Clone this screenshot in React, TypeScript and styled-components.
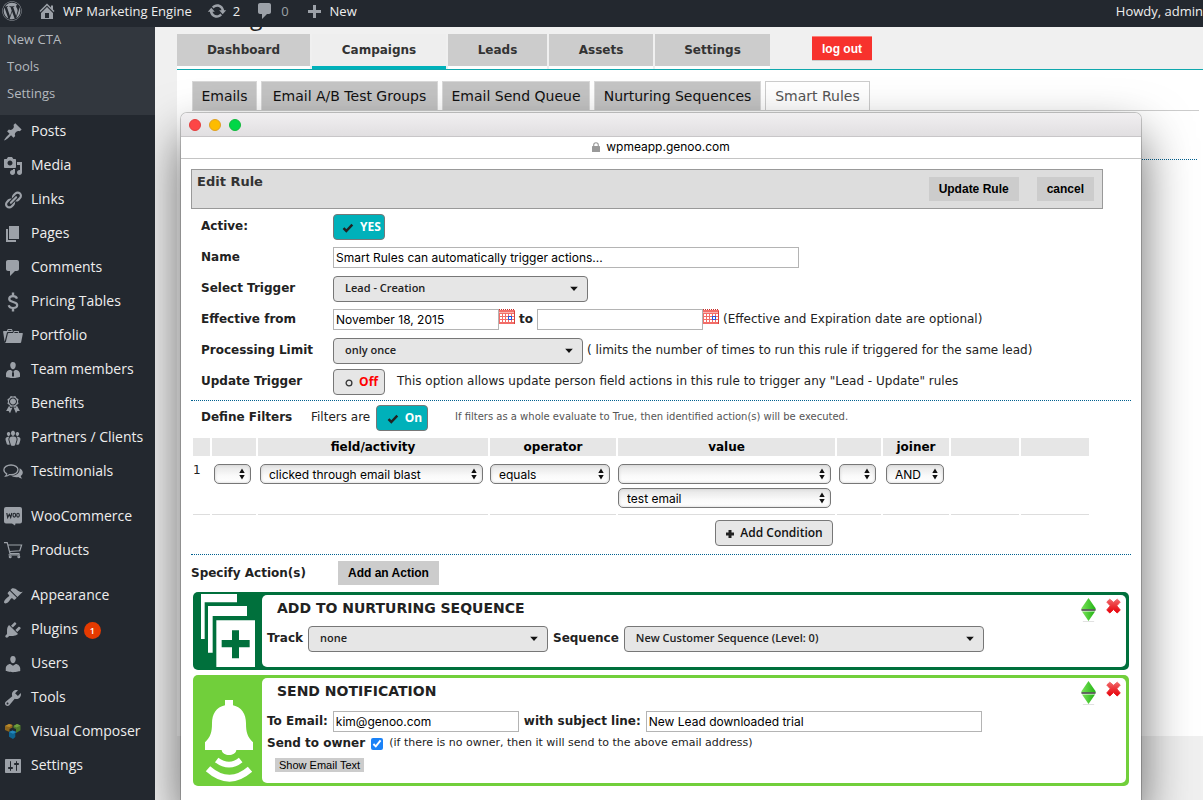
import React from "react";
import styled, { createGlobalStyle, css } from "styled-components";
import { FaWordpress } from "react-icons/fa";

const verdana = `Verdana, "DejaVu Sans", sans-serif`;
const arial = `"Liberation Sans", Arial, sans-serif`;
const system = `Inter, "Liberation Sans", sans-serif`;
const openSans = `"Open Sans", "Noto Sans", sans-serif`;

const GlobalStyle = createGlobalStyle`
  *, *::before, *::after { box-sizing: border-box; }
  body { margin: 0; background: #f0f0f0; overflow: hidden; }
  button, input, select { margin: 0; }
`;

/* ---------- Admin shell ---------- */

const Page = styled.div`
  display: flex;
  flex-direction: column;
  min-height: 100vh;
  overflow: hidden;
  font-family: ${verdana};
  font-size: 12px;
  color: #222;
`;

const AdminBar = styled.header`
  display: flex;
  align-items: center;
  height: 27px;
  padding: 0 0 5px 2px;
  background: #23282f;
  font-family: ${openSans};
  font-size: 13px;
  line-height: 20px;
  color: #eee;
  white-space: nowrap;
  z-index: 1;
`;

const BarLink = styled.a<{ $muted?: boolean }>`
  display: flex;
  align-items: center;
  gap: 6px;
  margin-right: 15px;
  color: ${(p) => (p.$muted ? "#9ca1a6" : "#eee")};
  text-decoration: none;

  svg {
    flex: none;
    color: #9ca1a8;
  }
`;

const Greeting = styled(BarLink)`
  margin: 0 0 0 auto;
`;

const Shell = styled.div`
  display: flex;
  flex: 1;
`;

const Sidebar = styled.nav`
  flex: none;
  width: 155px;
  background: #23282f;
  font-family: ${openSans};
  z-index: 1;
`;

const SubMenu = styled.div`
  padding-bottom: 7px;
  background: #32373e;
`;

const SubLink = styled.a`
  display: block;
  padding: 0 7px 3px;
  font-size: 13px;
  line-height: 24px;
  color: #b4b9be;
  text-decoration: none;
`;

const MenuLink = styled.a<{ $spaced?: boolean }>`
  display: flex;
  align-items: center;
  height: 34px;
  margin-top: ${(p) => (p.$spaced ? 11 : 0)}px;
  padding-left: 3px;
  gap: 8px;
  font-size: 14px;
  color: #eee;
  text-decoration: none;
  white-space: nowrap;

  svg {
    flex: none;
    color: #9ca1a8;
  }
`;

const MenuText = styled.span`
  padding-bottom: 2px;
  line-height: 20px;
`;

const Count = styled.span`
  width: 17px;
  margin-left: -2px;
  border-radius: 9px;
  background: #e53a00;
  color: #fff;
  font-size: 9px;
  font-weight: 600;
  line-height: 17px;
  text-align: center;
`;

const Main = styled.main`
  display: grid;
  flex: 1;
  min-width: 0;
  background: #f0f0f0;
`;

/* ---------- Page behind the window ---------- */

const Backdrop = styled.section`
  grid-area: 1 / 1;
  display: flex;
  flex-direction: column;
  min-width: 0;
  padding: 0 0 64px 22px;
`;

const ClippedTitle = styled.h1`
  display: flex;
  align-items: flex-end;
  height: 7px;
  margin: 0;
  padding: 0 0 4px 73px;
  font-family: ${openSans};
  font-size: 23px;
  line-height: 28px;
  font-weight: normal;
`;

const TopTabs = styled.div`
  display: flex;
  align-items: flex-start;
  gap: 2px;
  border-bottom: 1px solid #0fa8ad;
`;

const TopTab = styled.a<{ $width: number; $active?: boolean }>`
  width: ${(p) => p.$width}px;
  height: 35px;
  border-bottom: 3px solid ${(p) => (p.$active ? "#00b1ba" : "#fff")};
  background: ${(p) => (p.$active ? "#eee" : "#ccc")};
  color: #333;
  font-size: 12px;
  font-weight: bold;
  line-height: 32px;
  text-align: center;
  text-decoration: none;
`;

const LogOut = styled.button`
  width: 60px;
  height: 25px;
  margin: 2px 0 0 40px;
  padding: 0;
  border: 0;
  border-top: 1px solid #fb8078;
  border-bottom: 1px solid #ccc;
  background: #f7322d;
  color: #fff;
  font: bold 12px ${arial};
`;

const Panel = styled.div`
  flex: 1;
  padding: 11px 4px 0 15px;
  background: #fff;
`;

const SubTabs = styled.div`
  display: flex;
  gap: 4px;
  height: 30px;
  border-bottom: 1px solid #ccc;
`;

const SubTab = styled.a<{ $width: number; $active?: boolean }>`
  width: ${(p) => p.$width}px;
  height: 29px;
  border: 1px solid ${(p) => (p.$active ? "#ccc" : "#d8d8d8")};
  border-bottom: 0;
  background: ${(p) => (p.$active ? "#fff" : "#c4c4c4")};
  color: ${(p) => (p.$active ? "#555" : "#111")};
  font-size: 14px;
  line-height: 28px;
  text-align: center;
  text-decoration: none;
  white-space: nowrap;
`;

const dotted = css`
  height: 0;
  margin: 0;
  border: 0;
  border-top: 1px dotted #00608f;
`;

const PanelRule = styled.hr`
  ${dotted}
  margin: 48px 2px 0 0;
`;

/* ---------- Popup window ---------- */

const Window = styled.section`
  grid-area: 1 / 1;
  min-width: 960px;
  margin: 86px 62px 0 26px;
  border-radius: 6px 6px 0 0;
  background: #fff;
  box-shadow: 0 0 0 1px rgba(0, 0, 0, 0.2), 0 24px 50px rgba(0, 0, 0, 0.6);
  z-index: 0;
`;

const TitleBar = styled.div`
  display: flex;
  align-items: center;
  gap: 8px;
  height: 24px;
  padding-left: 8px;
  border-bottom: 1px solid #c8c6c8;
  border-radius: 6px 6px 0 0;
  background: linear-gradient(#f1eff1, #e1dfe1);
`;

const Light = styled.span<{ $color: string; $edge: string }>`
  width: 12px;
  height: 12px;
  border: 1px solid ${(p) => p.$edge};
  border-radius: 50%;
  background: ${(p) => p.$color};
`;

const AddressBar = styled.div`
  display: flex;
  align-items: center;
  justify-content: center;
  gap: 6px;
  height: 22px;
  padding-bottom: 2px;
  border-bottom: 1px solid #c4c4c4;
  color: #000;
  font: 12px/18px ${system};
`;

const Form = styled.form`
  padding: 10px 10px 0;
`;

const RuleHeader = styled.div`
  display: flex;
  align-items: flex-start;
  gap: 18px;
  height: 40px;
  margin-right: 28px;
  padding: 7px 8px 0 5px;
  border: 1px solid #999;
  background: #ddd;
`;

const RuleTitle = styled.h2`
  flex: 1;
  margin: 0;
  margin-top: -4px;
  color: #333;
  font-size: 13px;
  line-height: 18px;
`;

const FlatButton = styled.button<{ $small?: boolean }>`
  height: ${(p) => (p.$small ? 14 : 24)}px;
  padding: 0 ${(p) => (p.$small ? 4 : 10)}px;
  border: 0;
  background: #ccc;
  color: #000;
  font-family: ${arial};
  font-size: ${(p) => (p.$small ? 11 : 12)}px;
  font-weight: ${(p) => (p.$small ? "normal" : "bold")};
  line-height: 14px;
  white-space: nowrap;
`;

const Fields = styled.div`
  padding: 3px 0 2px 10px;
`;

const Field = styled.div`
  display: grid;
  grid-template-columns: 132px 1fr;
  align-items: center;
  height: 31px;
  padding: 2px 0 3px;
`;

const Label = styled.label`
  font-size: 12px;
  font-weight: bold;
  line-height: 16px;
  padding-bottom: 2px;
  white-space: nowrap;
`;

const Inline = styled.div<{ $gap?: number }>`
  display: flex;
  align-items: center;
  gap: ${(p) => p.$gap ?? 4}px;
`;

const Text = styled.span<{ $size?: number; $color?: string }>`
  padding-bottom: 2px;
  color: ${(p) => p.$color ?? "#222"};
  font-size: ${(p) => p.$size ?? 12}px;
  line-height: 16px;
  white-space: nowrap;
`;

const TextInput = styled.input<{ $width: number }>`
  width: ${(p) => p.$width}px;
  height: 21px;
  margin-bottom: 1px;
  padding: 0 2px;
  border: 1px solid #b4b4b4;
  border-radius: 0;
  background: #fff;
  color: #000;
  font: 12px ${system};
`;

const DateBox = styled.span`
  display: flex;
  align-items: flex-start;
`;

const Toggle = styled.button<{ $on?: boolean }>`
  display: flex;
  align-items: center;
  justify-content: center;
  gap: 6px;
  width: 52px;
  height: 26px;
  padding: 0 3px 1px 8px;
  border: 1px solid #777;
  border-radius: 4px;
  background: ${(p) => (p.$on ? "#00b1ba" : "#e6e6e6")};
  color: ${(p) => (p.$on ? "#fff" : "#f00")};
  font: bold 12px/16px ${openSans};

  svg {
    margin-top: 2px;
  }
`;

const SelectBox = styled.span<{ $width: number }>`
  position: relative;
  display: block;
  width: ${(p) => p.$width}px;

  svg {
    position: absolute;
    top: 50%;
    right: 10px;
    transform: translateY(-50%);
    pointer-events: none;
  }
`;

const WideSelect = styled.select`
  display: block;
  width: 100%;
  height: 26px;
  padding: 0 24px 4px 11px;
  border: 1px solid #777;
  border-radius: 4px;
  appearance: none;
  background: #e6e6e6;
  color: #222;
  font: 600 11px ${openSans};
`;

const NativeBox = styled(SelectBox)`
  svg {
    right: 6px;
  }
`;

const NativeSelect = styled.select`
  display: block;
  width: 100%;
  height: 20px;
  padding: 0 16px 0 8px;
  border: 1px solid #777;
  border-radius: 5px;
  appearance: none;
  background: linear-gradient(#e4e4e4, #fafafa 60%, #fff);
  box-shadow: inset 0 0 3px #ccc;
  color: #000;
  font: 12px ${system};
`;

const Dotted = styled.hr`
  ${dotted}
`;

const FilterHead = styled.div`
  display: flex;
  align-items: center;
  padding: 4px 0 5px 10px;
`;

const FilterLabel = styled(Label)`
  width: 110px;
`;

const FilterText = styled(Text)`
  width: 65px;
`;

const FilterNote = styled(Text)`
  margin-left: 27px;
`;

const Conditions = styled.table`
  border-collapse: separate;
  border-spacing: 2px;
  table-layout: fixed;
  width: 900px;
  margin-bottom: 6px;

  th {
    height: 18px;
    padding: 0;
    background: #e6e6e6;
    color: #000;
    font-size: 12px;
    line-height: 18px;
  }

  tbody td {
    height: 57px;
    padding: 6px 0;
    border-bottom: 1px solid #ddd;
    vertical-align: top;
  }

  tfoot td {
    padding: 3px 2px 0 0;
  }
`;

const Cell = styled.div<{ $inset?: number }>`
  display: flex;
  flex-direction: column;
  gap: 4px;
  padding-left: ${(p) => p.$inset ?? 0}px;
  font-size: 12px;
  line-height: 12px;
`;

const AddCondition = styled.button`
  display: flex;
  align-items: center;
  justify-content: center;
  gap: 5px;
  width: 118px;
  height: 26px;
  margin-left: auto;
  padding: 0 0 1px;
  border: 1px solid #777;
  border-radius: 4px;
  background: #e6e6e6;
  color: #111;
  font: 600 12px/16px ${openSans};

  svg {
    margin-top: 2px;
  }
`;

const ActionHead = styled.div`
  display: grid;
  grid-template-columns: 147px auto;
  justify-content: start;
  align-items: center;
  padding: 6px 0 7px;
`;

const ActionHeading = styled.h3`
  margin: 0;
  font-size: 12px;
  line-height: 16px;
`;

const Card = styled.article<{ $color: string }>`
  display: flex;
  margin: 0 2px 5px;
  border-radius: 5px;
  background: ${(p) => p.$color};
`;

const CardArt = styled.svg`
  flex: none;
  width: 69px;
`;

const CardBody = styled.div<{ $height: number }>`
  display: flex;
  flex-direction: column;
  flex: 1;
  min-height: ${(p) => p.$height}px;
  margin: 3px 3px 3px 0;
  padding: 3px 5px 0;
  border-radius: 5px;
  background: #fff;
`;

const CardTop = styled.div<{ $height: number }>`
  display: flex;
  align-items: flex-start;
  height: ${(p) => p.$height}px;
  padding-left: 10px;
`;

const CardTitle = styled.h3`
  flex: 1;
  margin: 0;
  font-size: 14px;
  line-height: 20px;
`;

const IconButton = styled.button`
  display: block;
  margin-left: 10px;
  padding: 0;
  border: 0;
  background: none;
`;

const Owner = styled.div`
  display: flex;
  align-items: center;
  height: 22px;
`;

const Check = styled.input`
  width: 12px;
  height: 12px;
  margin: 0 6px;
  accent-color: #1a82f7;
`;

const SmallRow = styled.div`
  padding: 3px 8px 0;
`;

/* ---------- Icons ---------- */

const dash: Record<string, string> = {
  home: "M16 8.5l1.53 1.53-1.06 1.06L10 4.6l-6.47 6.5-1.06-1.07L10 2.5l4 4v-2h2v4zm-6-2.46l6 5.99V18H4v-5.97zM12 17v-5H8v5h4z",
  update:
    "M10.2 3.28c3.53 0 6.43 2.61 6.92 6h2.08l-3.5 4-3.5-4h2.32c-.45-1.97-2.21-3.45-4.32-3.45-1.45 0-2.73.71-3.54 1.78L4.95 5.66C6.23 4.2 8.11 3.28 10.2 3.28zm-.4 13.44c-3.52 0-6.43-2.61-6.92-6H.8l3.5-4c1.17 1.33 2.33 2.67 3.5 4H5.48c.45 1.97 2.21 3.45 4.32 3.45 1.45 0 2.73-.71 3.54-1.78l1.71 1.95c-1.28 1.46-3.15 2.38-5.25 2.38z",
  plus: "M17 9v3h-5v5H9v-5H4V9h5V4h3v5h5z",
  pin: "M10.44 3.02l1.82-1.82 6.36 6.35-1.83 1.82c-1.05-.68-2.48-.57-3.41.36l-.75.75c-.92.93-1.04 2.35-.35 3.41l-1.83 1.82-2.41-2.41-2.8 2.79c-.42.42-3.38 2.71-3.8 2.29s1.86-3.39 2.28-3.81l2.79-2.79L4.1 9.36l1.83-1.82c1.05.69 2.48.57 3.4-.36l.75-.75c.93-.92 1.05-2.35.36-3.41z",
  media:
    "M13 11V4c0-.55-.45-1-1-1h-1.67L9 1H5L3.67 3H2c-.55 0-1 .45-1 1v7c0 .55.45 1 1 1h10c.55 0 1-.45 1-1zM7 4.5c1.38 0 2.5 1.12 2.5 2.5S8.38 9.5 7 9.5 4.5 8.38 4.5 7 5.62 4.5 7 4.5zM14 6h5v10.5c0 1.38-1.12 2.5-2.5 2.5S14 17.88 14 16.5s1.12-2.5 2.5-2.5c.17 0 .34.02.5.05V9h-3V6zm-4 8.05V13h2v3.5c0 1.38-1.12 2.5-2.5 2.5S7 17.88 7 16.5 8.12 14 9.5 14c.17 0 .34.02.5.05z",
  links:
    "M17.74 2.76c1.68 1.69 1.68 4.41 0 6.1l-1.53 1.52c-1.12 1.12-2.7 1.47-4.14 1.09l2.62-2.61.76-.77.76-.76c.84-.84.84-2.2 0-3.04-.84-.85-2.2-.85-3.04 0l-.77.76-3.38 3.38c-.37-1.44-.02-3.02 1.1-4.14l1.52-1.53c1.69-1.68 4.42-1.68 6.1 0zM8.59 13.43l5.34-5.34c.42-.42.42-1.1 0-1.52-.44-.43-1.13-.39-1.53 0l-5.33 5.34c-.42.42-.42 1.1 0 1.52.44.43 1.13.39 1.52 0zm-.76 2.29l4.14-4.15c.38 1.44.03 3.02-1.09 4.14l-1.52 1.53c-1.69 1.68-4.41 1.68-6.1 0-1.68-1.68-1.68-4.42 0-6.1l1.53-1.52c1.12-1.12 2.7-1.47 4.14-1.1l-4.14 4.15c-.85.84-.85 2.2 0 3.05.84.84 2.2.84 3.04 0z",
  pages: "M6 15V2h10v13H6zm-1 1h8v2H3V5h2v11z",
  comments: "M5 2h9c1.1 0 2 .9 2 2v7c0 1.1-.9 2-2 2h-2l-5 5v-5H5c-1.1 0-2-.9-2-2V4c0-1.1.9-2 2-2z",
  portfolio:
    "M4 5H.78c-.37 0-.74.32-.69.84l1.56 9.99S3.5 8.47 3.86 6.7c.11-.53.61-.7.98-.7H10s-.7-2.08-.77-2.31C9.11 3.25 8.89 3 8.45 3H5.14c-.36 0-.7.23-.8.64C4.25 4.04 4 5 4 5zm4.88 0h-4s.42-1 .87-1h2.13c.48 0 1 1 1 1zM2.67 16.25c-.31.47-.76.75-1.26.75h15.73c.54 0 .92-.31 1.03-.83.44-2.19 1.68-8.44 1.68-8.44.07-.5-.3-.73-.62-.73H16V5.53c0-.16-.26-.53-.66-.53h-3.76c-.52 0-.87.58-.87.58L10 7H5.59c-.32 0-.63.19-.69.5 0 0-1.59 6.7-1.72 7.33-.07.37-.22.99-.51 1.42zM15.38 7H11s.58-1 1.13-1h2.29c.71 0 .96 1 .96 1z",
  team: "M7.3 6l-.03-.19c-.04-.37-.05-.73-.03-1.08.02-.36.1-.71.25-1.04.14-.32.31-.61.52-.86s.49-.46.83-.6c.34-.15.72-.23 1.13-.23.69 0 1.26.2 1.71.59s.76.87.91 1.44.18 1.16.09 1.78l-.03.19c-.01.09-.05.25-.11.48-.05.24-.12.47-.2.69-.08.21-.19.45-.34.72-.14.27-.3.49-.47.69-.18.19-.4.34-.67.48-.27.13-.55.19-.86.19s-.59-.06-.87-.19c-.26-.13-.49-.29-.67-.5-.18-.2-.34-.42-.49-.66-.15-.25-.26-.49-.34-.73-.09-.25-.16-.47-.21-.67-.06-.21-.1-.37-.12-.5zm9.2 6.24c.41.7.5 1.41.5 2.14v2.49c0 .03-.12.08-.29.13-.18.04-.42.13-.97.27-.55.12-1.1.24-1.65.34s-1.19.19-1.95.27c-.75.08-1.46.12-2.13.12-.68 0-1.39-.04-2.14-.12-.75-.07-1.4-.17-1.98-.27-.58-.11-1.08-.23-1.56-.34-.49-.11-.8-.21-1.06-.29L3 16.87v-2.49c0-.75.07-1.46.46-2.15s.81-1.25 1.5-1.68C5.66 10.12 7.19 10 8 10l1.67 1.67L9 13v3l1.02 1.08L11 16v-3l-.68-1.33L11.97 10c.77 0 2.2.07 2.9.52.71.45 1.21 1.02 1.63 1.72z",
  users:
    "M10 9.25c-2.27 0-2.73-3.44-2.73-3.44C7 4.02 7.82 2 9.97 2c2.16 0 2.98 2.02 2.71 3.81 0 0-.41 3.44-2.68 3.44zm0 2.57L12.72 10c2.39 0 4.52 2.33 4.52 4.53v2.49s-3.65 1.13-7.24 1.13c-3.65 0-7.24-1.13-7.24-1.13v-2.49c0-2.25 1.94-4.48 4.47-4.48z",
  awards:
    "M4.46 5.16L5 7.46l-.54 2.29 2.01 1.24L7.7 13l2.3-.54 2.3.54 1.23-2.01 2.01-1.24L15 7.46l.54-2.3-2-1.24-1.24-2.01-2.3.55-2.29-.54-1.25 2zm5.55 6.34C7.79 11.5 6 9.71 6 7.49c0-2.2 1.79-3.99 4.01-3.99 2.2 0 3.99 1.79 3.99 3.99 0 2.22-1.79 4.01-3.99 4.01zm-.02-1C8.33 10.5 7 9.16 7 7.5c0-1.65 1.33-3 2.99-3S13 5.85 13 7.5c0 1.66-1.35 3-3.01 3zm3.84 1.1l-1.28 2.24-2.08-.47L13 19.2l1.4-2.2h2.5zm-7.7.07l1.25 2.25 2.13-.51L7 19.2 5.6 17H3.1z",
  groups:
    "M8.03 4.46c-.29 1.28.55 3.46 1.97 3.46 1.41 0 2.25-2.18 1.96-3.46-.22-.98-1.08-1.63-1.96-1.63-.89 0-1.74.65-1.97 1.63zm-4.13.9c-.25 1.08.47 2.93 1.67 2.93s1.92-1.85 1.67-2.93c-.19-.83-.92-1.39-1.67-1.39s-1.48.56-1.67 1.39zm8.86 0c-.25 1.08.47 2.93 1.66 2.93 1.2 0 1.92-1.85 1.67-2.93-.19-.83-.92-1.39-1.67-1.39-.74 0-1.47.56-1.66 1.39zm-.59 11.43l1.25-4.3C14.2 10 12.71 8.47 10 8.47c-2.72 0-4.21 1.53-3.44 4.02l1.26 4.3C8.05 17.51 9 18 10 18c.98 0 1.94-.49 2.17-1.21zm-6.1-7.63c-.49.67-.96 1.83-.42 3.59l1.12 3.79c-.34.2-.77.31-1.2.31-.85 0-1.65-.41-1.85-1.03l-1.07-3.65c-.65-2.11.61-3.4 2.92-3.4.27 0 .54.02.79.06-.1.1-.2.22-.29.33zm8.35-.39c2.31 0 3.58 1.29 2.92 3.4l-1.07 3.65c-.2.62-1 1.03-1.85 1.03-.43 0-.86-.11-1.2-.31l1.11-3.77c.55-1.78.08-2.94-.42-3.61-.08-.11-.18-.23-.28-.33.25-.04.51-.06.79-.06z",
  appearance:
    "M14.48 11.06L7.41 3.99l1.5-1.5c.5-.56 2.3-.47 3.51.32 1.21.8 1.43 1.28 2.91 2.1 1.18.64 2.45 1.26 4.45.85zm-.71.71L6.7 4.7 4.93 6.47c-.39.39-.39 1.02 0 1.41l1.06 1.06c.39.39.39 1.03 0 1.42-.6.6-1.43 1.11-2.21 1.69-.35.26-.7.53-1.01.84C1.43 14.23.4 16.08 1.4 17.07c.99 1 2.84-.03 4.18-1.36.31-.31.58-.66.85-1.02.57-.78 1.08-1.61 1.69-2.21.39-.39 1.02-.39 1.41 0l1.06 1.06c.39.39 1.02.39 1.41 0z",
  plugins:
    "M13.11 4.36L9.87 7.6 8 5.73l3.24-3.24c.35-.34 1.05-.2 1.56.32.52.51.66 1.21.31 1.55zm-8 1.77l.91-1.12 9.01 9.01-1.19.84c-.71.71-2.63 1.16-3.82 1.16H6.14L4.9 17.26c-.59.59-1.54.59-2.12 0-.59-.58-.59-1.53 0-2.12l1.24-1.24v-3.88c0-1.13.4-3.19 1.09-3.89zm7.26 3.97l3.24-3.24c.34-.35 1.04-.21 1.55.31.52.51.66 1.21.31 1.55l-3.24 3.25z",
  tools:
    "M16.68 9.77c-1.34 1.34-3.3 1.67-4.95.99l-5.41 6.52c-.99.99-2.59.99-3.58 0s-.99-2.59 0-3.57l6.52-5.42c-.68-1.65-.35-3.61.99-4.95 1.28-1.28 3.12-1.62 4.72-1.06l-2.89 2.89 2.82 2.82 2.86-2.87c.53 1.58.18 3.39-1.08 4.65zM3.81 16.21c.4.39 1.04.39 1.43 0 .4-.4.4-1.04 0-1.43-.39-.4-1.03-.4-1.43 0-.39.39-.39 1.03 0 1.43z",
  settings:
    "M18 16V4c0-.55-.45-1-1-1H3c-.55 0-1 .45-1 1v12c0 .55.45 1 1 1h14c.55 0 1-.45 1-1zM8 11h1c.55 0 1 .45 1 1s-.45 1-1 1H8v1.5c0 .28-.22.5-.5.5s-.5-.22-.5-.5V13H6c-.55 0-1-.45-1-1s.45-1 1-1h1V5.5c0-.28.22-.5.5-.5s.5.22.5.5V11zm5-2h-1c-.55 0-1-.45-1-1s.45-1 1-1h1V5.5c0-.28.22-.5.5-.5s.5.22.5.5V7h1c.55 0 1 .45 1 1s-.45 1-1 1h-1v5.5c0 .28-.22.5-.5.5s-.5-.22-.5-.5V9z",
};

const Dash = ({ name }: { name: string }) => (
  <svg width="20" height="20" viewBox="0 0 20 20" fill="currentColor" aria-hidden="true">
    <path d={dash[name]} />
  </svg>
);

const Dollar = () => (
  <svg width="20" height="20" viewBox="0 0 20 20" fill="none" stroke="currentColor" aria-hidden="true">
    <path d="M14 6.6C13.4 4.9 12 4.2 10 4.2c-2.3 0-3.8 1.1-3.8 2.8 0 4 8 2 8 6 0 1.800-1.600 3-4.200 3-2.300 0-3.800-.9-4.300-2.700" strokeWidth="2.200" />
    <path d="M10 .5V4M10 16v3.500" strokeWidth="2.400" />
  </svg>
);

const Bubbles = () => (
  <svg width="20" height="20" viewBox="0 0 20 20" aria-hidden="true">
    <path d="M16.500 6.200c2 .9 3.300 2.400 3.300 4.200 0 1.400-.8 2.700-2.100 3.600.1.900.6 1.700 1.500 2.400-1.500.1-2.900-.4-3.900-1.300-2.800.5-5.600-.1-7.200-1.500 5 .3 9.200-2.500 8.400-7.400z" fill="currentColor" />
    <path d="M8 3c4 0 7 2.100 7 4.800s-3 4.900-7 4.900c-.6 0-1.200 0-1.700-.1C5.300 13.600 4 14.200 2.600 14.200c.7-.7 1.100-1.500 1.100-2.400C2 10.900.9 9.500.9 7.800.9 5.100 4 3 8 3z" fill="none" stroke="currentColor" strokeWidth="1.300" />
  </svg>
);

const Woo = () => (
  <svg width="20" height="20" viewBox="0 0 20 20" aria-hidden="true">
    <path d="M3 0h14a2 2 0 0 1 2 2v12.500a2 2 0 0 1-2 2h-4.500l-.5 2-3-2H3a2 2 0 0 1-2-2V2a2 2 0 0 1 2-2z" fill="currentColor" />
    <path d="M3.800 6l.9 4.500 1.600-3.200 1.400 3.200L8.800 6" fill="none" stroke="#23282f" strokeWidth="1.200" />
    <ellipse cx="11.300" cy="8.200" rx="1.300" ry="1.900" fill="none" stroke="#23282f" strokeWidth="1.100" />
    <ellipse cx="15" cy="8.200" rx="1.300" ry="1.900" fill="none" stroke="#23282f" strokeWidth="1.100" />
  </svg>
);

const Cart = () => (
  <svg width="20" height="20" viewBox="0 0 20 20" fill="none" stroke="currentColor" strokeWidth="1.200" aria-hidden="true">
    <path d="M1 1.600h3.200L7 12.500h9.500M5 4h13.600l-1.800 5.800L6.300 10.500M5.500 13.800h11.500" />
    <circle cx="7.200" cy="15.800" r=".9" />
    <circle cx="15.800" cy="15.800" r=".9" />
  </svg>
);

const Composer = () => (
  <svg width="20" height="20" viewBox="0 0 20 20" aria-hidden="true">
    <path d="M2 4l4-2 3.500 1v2.500L6.500 7v3L2 8z" fill="#8f661c" />
    <path d="M2 4l4-2 3.500 1L6.500 5z" fill="#b98a2c" />
    <path d="M10.500 4L14 2l3.500 1.500v4.700L13 11V7l-2.500-1z" fill="#4f7a2b" />
    <path d="M10.500 4L14 2l3.500 1.500-4 2z" fill="#71a03f" />
    <path d="M6 10l3.500-1.500 3.800 1.500-1 1.500v3.500L10 17l-4-2.200z" fill="#0d6390" />
    <path d="M6 10l3.500-1.500 3.800 1.500L10 11.800z" fill="#2487ba" />
  </svg>
);

const Lock = () => (
  <svg width="8" height="10" viewBox="0 0 8 10" aria-hidden="true">
    <rect y="4" width="8" height="6" rx=".6" fill="#999" />
    <path d="M1.700 4.500V3a2.300 2.300 0 0 1 4.600 0v1.500" fill="none" stroke="#999" strokeWidth="1.100" />
  </svg>
);

const Calendar = () => (
  <svg width="16" height="16" viewBox="0 0 16 16" aria-hidden="true">
    <rect y="1" width="16" height="14" fill="#f26d68" />
    <path d="M0 .5h16" stroke="#c9302c" strokeDasharray="1 1" />
    <path d="M0 3.500h15" stroke="#fbb3af" />
    {[5, 8, 11].map((y) =>
      [1, 4, 7, 10, 13].map((x) => <rect key={`${x}-${y}`} x={x} y={y} width="2" height="2" fill="#fff" />)
    )}
    <rect x="9.500" y="7.500" width="3" height="3" fill="#fff" stroke="#2a55d8" />
    <path d="M15.500 2v13" stroke="#d8413c" />
  </svg>
);

const Caret = () => (
  <svg width="8" height="5" viewBox="0 0 8 5" aria-hidden="true">
    <path d="M0 0h8l-4 4.500z" fill="#111" />
  </svg>
);

const UpDown = () => (
  <svg width="6" height="12" viewBox="0 0 6 12" aria-hidden="true">
    <path d="M3 .5L5.700 5H.3zM3 11.500L5.700 7H.3z" fill="#111" />
  </svg>
);

const Tick = () => (
  <svg width="12" height="10" viewBox="0 0 12 10" aria-hidden="true">
    <path d="M1.500 5.200l2.800 2.800L10.300 1.700" fill="none" stroke="#222" strokeWidth="2.500" />
  </svg>
);

const Ring = () => (
  <svg width="8" height="8" viewBox="0 0 8 8" aria-hidden="true">
    <circle cx="4" cy="4" r="2.900" fill="none" stroke="#333" strokeWidth="1.300" />
  </svg>
);

const Cross = () => (
  <svg width="10" height="10" viewBox="0 0 10 10" aria-hidden="true">
    <path d="M3.500 1h3v2.500H9v3H6.500V9h-3V6.500H1v-3h2.500z" fill="#222" />
  </svg>
);

const Sort = () => (
  <svg width="15" height="24" viewBox="0 0 16 24" preserveAspectRatio="none" aria-hidden="true">
    <defs>
      <linearGradient id="leaf" x2="1">
        <stop offset="0" stopColor="#7be35a" />
        <stop offset="1" stopColor="#20b312" />
      </linearGradient>
    </defs>
    <path d="M8 0l7 9.500 1 2H0l1-2z" fill="url(#leaf)" />
    <path d="M1 13.500h14L8 23z" fill="url(#leaf)" />
    <path d="M.5 12h15" stroke="#464646" strokeWidth="1.600" />
    <path d="M2 23.600h12" stroke="#ccc" strokeWidth=".7" />
  </svg>
);

const Remove = () => (
  <svg width="15" height="16" viewBox="0 0 16 17" aria-hidden="true">
    <defs>
      <linearGradient id="cherry" x2="0" y2="1">
        <stop offset="0" stopColor="#f0696b" />
        <stop offset=".5" stopColor="#ec3035" />
        <stop offset="1" stopColor="#e80009" />
      </linearGradient>
    </defs>
    <path d="M4 1.200L8 4.500 12 1.200 15.200 4.200 11.500 8.300 15.200 12.700 12 16 8 12.300 4 16 .8 12.700 4.500 8.300.8 4.200z" fill="url(#cherry)" stroke="url(#cherry)" strokeWidth="1" strokeLinejoin="round" />
  </svg>
);

const SequenceArt = () => (
  <CardArt viewBox="39 36 207 234" height="78" aria-hidden="true">
    <path d="M63 42h108v25H74v110H63z" fill="#fff" />
    <path d="M84 78h117v30H98v110H84z" fill="#fff" />
    <path d="M109 121h116v140H109z" fill="#fff" />
    <path d="M156 151h21v29h32v22h-32v33h-21v-33h-31v-22h31z" fill="#00703c" />
  </CardArt>
);

const BellArt = () => (
  <CardArt viewBox="39 285 207 333" height="111" aria-hidden="true">
    <path d="M135 360h24v16c26 6 39 26 39 54 0 28 4 40 21 57v23h-50c-2 20-42 20-44 0H75v-23c17-17 21-29 21-57 0-28 13-48 39-54z" fill="#fff" />
    <path d="M110 540q38 28 72 0" fill="none" stroke="#fff" strokeWidth="17" />
    <path d="M84 566q64 56 126 2" fill="none" stroke="#fff" strokeWidth="20" />
  </CardArt>
);

/* ---------- Composed controls ---------- */

const Dropdown = ({ id, width, value }: { id: string; width: number; value: string }) => (
  <SelectBox $width={width}>
    <WideSelect id={id}>
      <option>{value}</option>
    </WideSelect>
    <Caret />
  </SelectBox>
);

const Picker = ({ label, width, value = "" }: { label: string; width: number; value?: string }) => (
  <NativeBox $width={width}>
    <NativeSelect aria-label={label}>
      <option>{value}</option>
    </NativeSelect>
    <UpDown />
  </NativeBox>
);

const CardTools = () => (
  <>
    <IconButton type="button" aria-label="Reorder action">
      <Sort />
    </IconButton>
    <IconButton type="button" aria-label="Remove action">
      <Remove />
    </IconButton>
  </>
);

const columns = [
  { width: 17, title: "" },
  { width: 44, title: "" },
  { width: 230, title: "field/activity" },
  { width: 126, title: "operator" },
  { width: 217, title: "value" },
  { width: 44, title: "" },
  { width: 66, title: "joiner" },
  { width: 68, title: "" },
  { width: 68, title: "" },
];

const menu: { label: string; icon: React.ReactNode; spaced?: boolean; count?: number }[] = [
  { label: "Posts", icon: <Dash name="pin" /> },
  { label: "Media", icon: <Dash name="media" /> },
  { label: "Links", icon: <Dash name="links" /> },
  { label: "Pages", icon: <Dash name="pages" /> },
  { label: "Comments", icon: <Dash name="comments" /> },
  { label: "Pricing Tables", icon: <Dollar /> },
  { label: "Portfolio", icon: <Dash name="portfolio" /> },
  { label: "Team members", icon: <Dash name="team" /> },
  { label: "Benefits", icon: <Dash name="awards" /> },
  { label: "Partners / Clients", icon: <Dash name="groups" /> },
  { label: "Testimonials", icon: <Bubbles /> },
  { label: "WooCommerce", icon: <Woo />, spaced: true },
  { label: "Products", icon: <Cart /> },
  { label: "Appearance", icon: <Dash name="appearance" />, spaced: true },
  { label: "Plugins", icon: <Dash name="plugins" />, count: 1 },
  { label: "Users", icon: <Dash name="users" /> },
  { label: "Tools", icon: <Dash name="tools" /> },
  { label: "Visual Composer", icon: <Composer /> },
  { label: "Settings", icon: <Dash name="settings" /> },
];

export default function App() {
  return (
    <Page>
      <GlobalStyle />
      <AdminBar>
        <BarLink href="#" aria-label="WordPress">
          <FaWordpress size={20} />
        </BarLink>
        <BarLink href="#">
          <Dash name="home" />
          WP Marketing Engine
        </BarLink>
        <BarLink href="#">
          <Dash name="update" />2
        </BarLink>
        <BarLink href="#" $muted>
          <Dash name="comments" />0
        </BarLink>
        <BarLink href="#">
          <Dash name="plus" />
          New
        </BarLink>
        <Greeting href="#">Howdy, admin</Greeting>
      </AdminBar>

      <Shell>
        <Sidebar>
          <SubMenu>
            <SubLink href="#">New CTA</SubLink>
            <SubLink href="#">Tools</SubLink>
            <SubLink href="#">Settings</SubLink>
          </SubMenu>
          {menu.map((item) => (
            <MenuLink key={item.label} href="#" $spaced={item.spaced}>
              {item.icon}
              <MenuText>{item.label}</MenuText>
              {item.count && <Count>{item.count}</Count>}
            </MenuLink>
          ))}
        </Sidebar>

        <Main>
          <Backdrop>
            <ClippedTitle>g</ClippedTitle>
            <TopTabs>
              <TopTab href="#" $width={133}>Dashboard</TopTab>
              <TopTab href="#" $width={134} $active>Campaigns</TopTab>
              <TopTab href="#" $width={99}>Leads</TopTab>
              <TopTab href="#" $width={104}>Assets</TopTab>
              <TopTab href="#" $width={115}>Settings</TopTab>
              <LogOut type="button">log out</LogOut>
            </TopTabs>
            <Panel>
              <SubTabs>
                <SubTab href="#" $width={65}>Emails</SubTab>
                <SubTab href="#" $width={177}>Email A/B Test Groups</SubTab>
                <SubTab href="#" $width={148}>Email Send Queue</SubTab>
                <SubTab href="#" $width={167}>Nurturing Sequences</SubTab>
                <SubTab href="#" $width={105} $active>Smart Rules</SubTab>
              </SubTabs>
              <PanelRule />
            </Panel>
          </Backdrop>

          <Window>
            <TitleBar>
              <Light $color="#fd4646" $edge="#e33e3e" />
              <Light $color="#fdbc00" $edge="#dfa023" />
              <Light $color="#00d747" $edge="#12b83d" />
            </TitleBar>
            <AddressBar>
              <Lock />
              wpmeapp.genoo.com
            </AddressBar>

            <Form>
              <RuleHeader>
                <RuleTitle>Edit Rule</RuleTitle>
                <FlatButton type="button">Update Rule</FlatButton>
                <FlatButton type="button">cancel</FlatButton>
              </RuleHeader>

              <Fields>
                <Field>
                  <Label htmlFor="active">Active:</Label>
                  <Toggle id="active" type="button" $on>
                    <Tick />
                    YES
                  </Toggle>
                </Field>
                <Field>
                  <Label htmlFor="name">Name</Label>
                  <TextInput id="name" $width={466} defaultValue="Smart Rules can automatically trigger actions..." />
                </Field>
                <Field>
                  <Label htmlFor="trigger">Select Trigger</Label>
                  <Dropdown id="trigger" width={255} value="Lead - Creation" />
                </Field>
                <Field>
                  <Label htmlFor="from">Effective from</Label>
                  <Inline>
                    <DateBox>
                      <TextInput id="from" $width={166} defaultValue="November 18, 2015" />
                      <Calendar />
                    </DateBox>
                    <Label htmlFor="to">to</Label>
                    <DateBox>
                      <TextInput id="to" $width={166} />
                      <Calendar />
                    </DateBox>
                    <Text>(Effective and Expiration date are optional)</Text>
                  </Inline>
                </Field>
                <Field>
                  <Label htmlFor="limit">Processing Limit</Label>
                  <Inline>
                    <Dropdown id="limit" width={250} value="only once" />
                    <Text>( limits the number of times to run this rule if triggered for the same lead)</Text>
                  </Inline>
                </Field>
                <Field>
                  <Label htmlFor="update">Update Trigger</Label>
                  <Inline $gap={12}>
                    <Toggle id="update" type="button">
                      <Ring />
                      Off
                    </Toggle>
                    <Text>This option allows update person field actions in this rule to trigger any "Lead - Update" rules</Text>
                  </Inline>
                </Field>
              </Fields>

              <Dotted />
              <FilterHead>
                <FilterLabel htmlFor="filters">Define Filters</FilterLabel>
                <FilterText>Filters are</FilterText>
                <Toggle id="filters" type="button" $on>
                  <Tick />
                  On
                </Toggle>
                <FilterNote $size={10} $color="#555">
                  If filters as a whole evaluate to True, then identified action(s) will be executed.
                </FilterNote>
              </FilterHead>

              <Conditions>
                <colgroup>
                  {columns.map((c, i) => (
                    <col key={i} width={c.width} />
                  ))}
                </colgroup>
                <thead>
                  <tr>
                    {columns.map((c, i) => (
                      <th key={i}>{c.title}</th>
                    ))}
                  </tr>
                </thead>
                <tbody>
                  <tr>
                    <td><Cell>1</Cell></td>
                    <td><Cell $inset={2}><Picker label="Open group" width={37} /></Cell></td>
                    <td><Cell $inset={2}><Picker label="Field or activity" width={223} value="clicked through email blast" /></Cell></td>
                    <td><Cell><Picker label="Operator" width={120} value="equals" /></Cell></td>
                    <td>
                      <Cell>
                        <Picker label="Value type" width={213} />
                        <Picker label="Value" width={213} value="test email" />
                      </Cell>
                    </td>
                    <td><Cell $inset={2}><Picker label="Close group" width={37} /></Cell></td>
                    <td><Cell $inset={3}><Picker label="Joiner" width={58} value="AND" /></Cell></td>
                    <td />
                    <td />
                  </tr>
                </tbody>
                <tfoot>
                  <tr>
                    <td colSpan={5}>
                      <AddCondition type="button">
                        <Cross />
                        Add Condition
                      </AddCondition>
                    </td>
                  </tr>
                </tfoot>
              </Conditions>

              <Dotted />
              <ActionHead>
                <ActionHeading>Specify Action(s)</ActionHeading>
                <FlatButton type="button">Add an Action</FlatButton>
              </ActionHead>

              <Card $color="#00703c">
                <SequenceArt />
                <CardBody $height={72}>
                  <CardTop $height={28}>
                    <CardTitle>ADD TO NURTURING SEQUENCE</CardTitle>
                    <CardTools />
                  </CardTop>
                  <Inline $gap={5}>
                    <Label htmlFor="track">Track</Label>
                    <Dropdown id="track" width={240} value="none" />
                    <Label htmlFor="sequence">Sequence</Label>
                    <Dropdown id="sequence" width={360} value="New Customer Sequence (Level: 0)" />
                  </Inline>
                </CardBody>
              </Card>

              <Card $color="#71cf3b">
                <BellArt />
                <CardBody $height={105}>
                  <CardTop $height={30}>
                    <CardTitle>SEND NOTIFICATION</CardTitle>
                    <CardTools />
                  </CardTop>
                  <Inline $gap={5}>
                    <Label htmlFor="email">To Email:</Label>
                    <TextInput id="email" $width={186} defaultValue="kim@genoo.com" />
                    <Label htmlFor="subject">with subject line:</Label>
                    <TextInput id="subject" $width={336} defaultValue="New Lead downloaded trial" />
                  </Inline>
                  <Owner>
                    <Label htmlFor="owner">Send to owner</Label>
                    <Check id="owner" type="checkbox" defaultChecked />
                    <Text $size={11}>(if there is no owner, then it will send to the above email address)</Text>
                  </Owner>
                  <SmallRow>
                    <FlatButton type="button" $small>Show Email Text</FlatButton>
                  </SmallRow>
                </CardBody>
              </Card>
            </Form>
          </Window>
        </Main>
      </Shell>
    </Page>
  );
}
